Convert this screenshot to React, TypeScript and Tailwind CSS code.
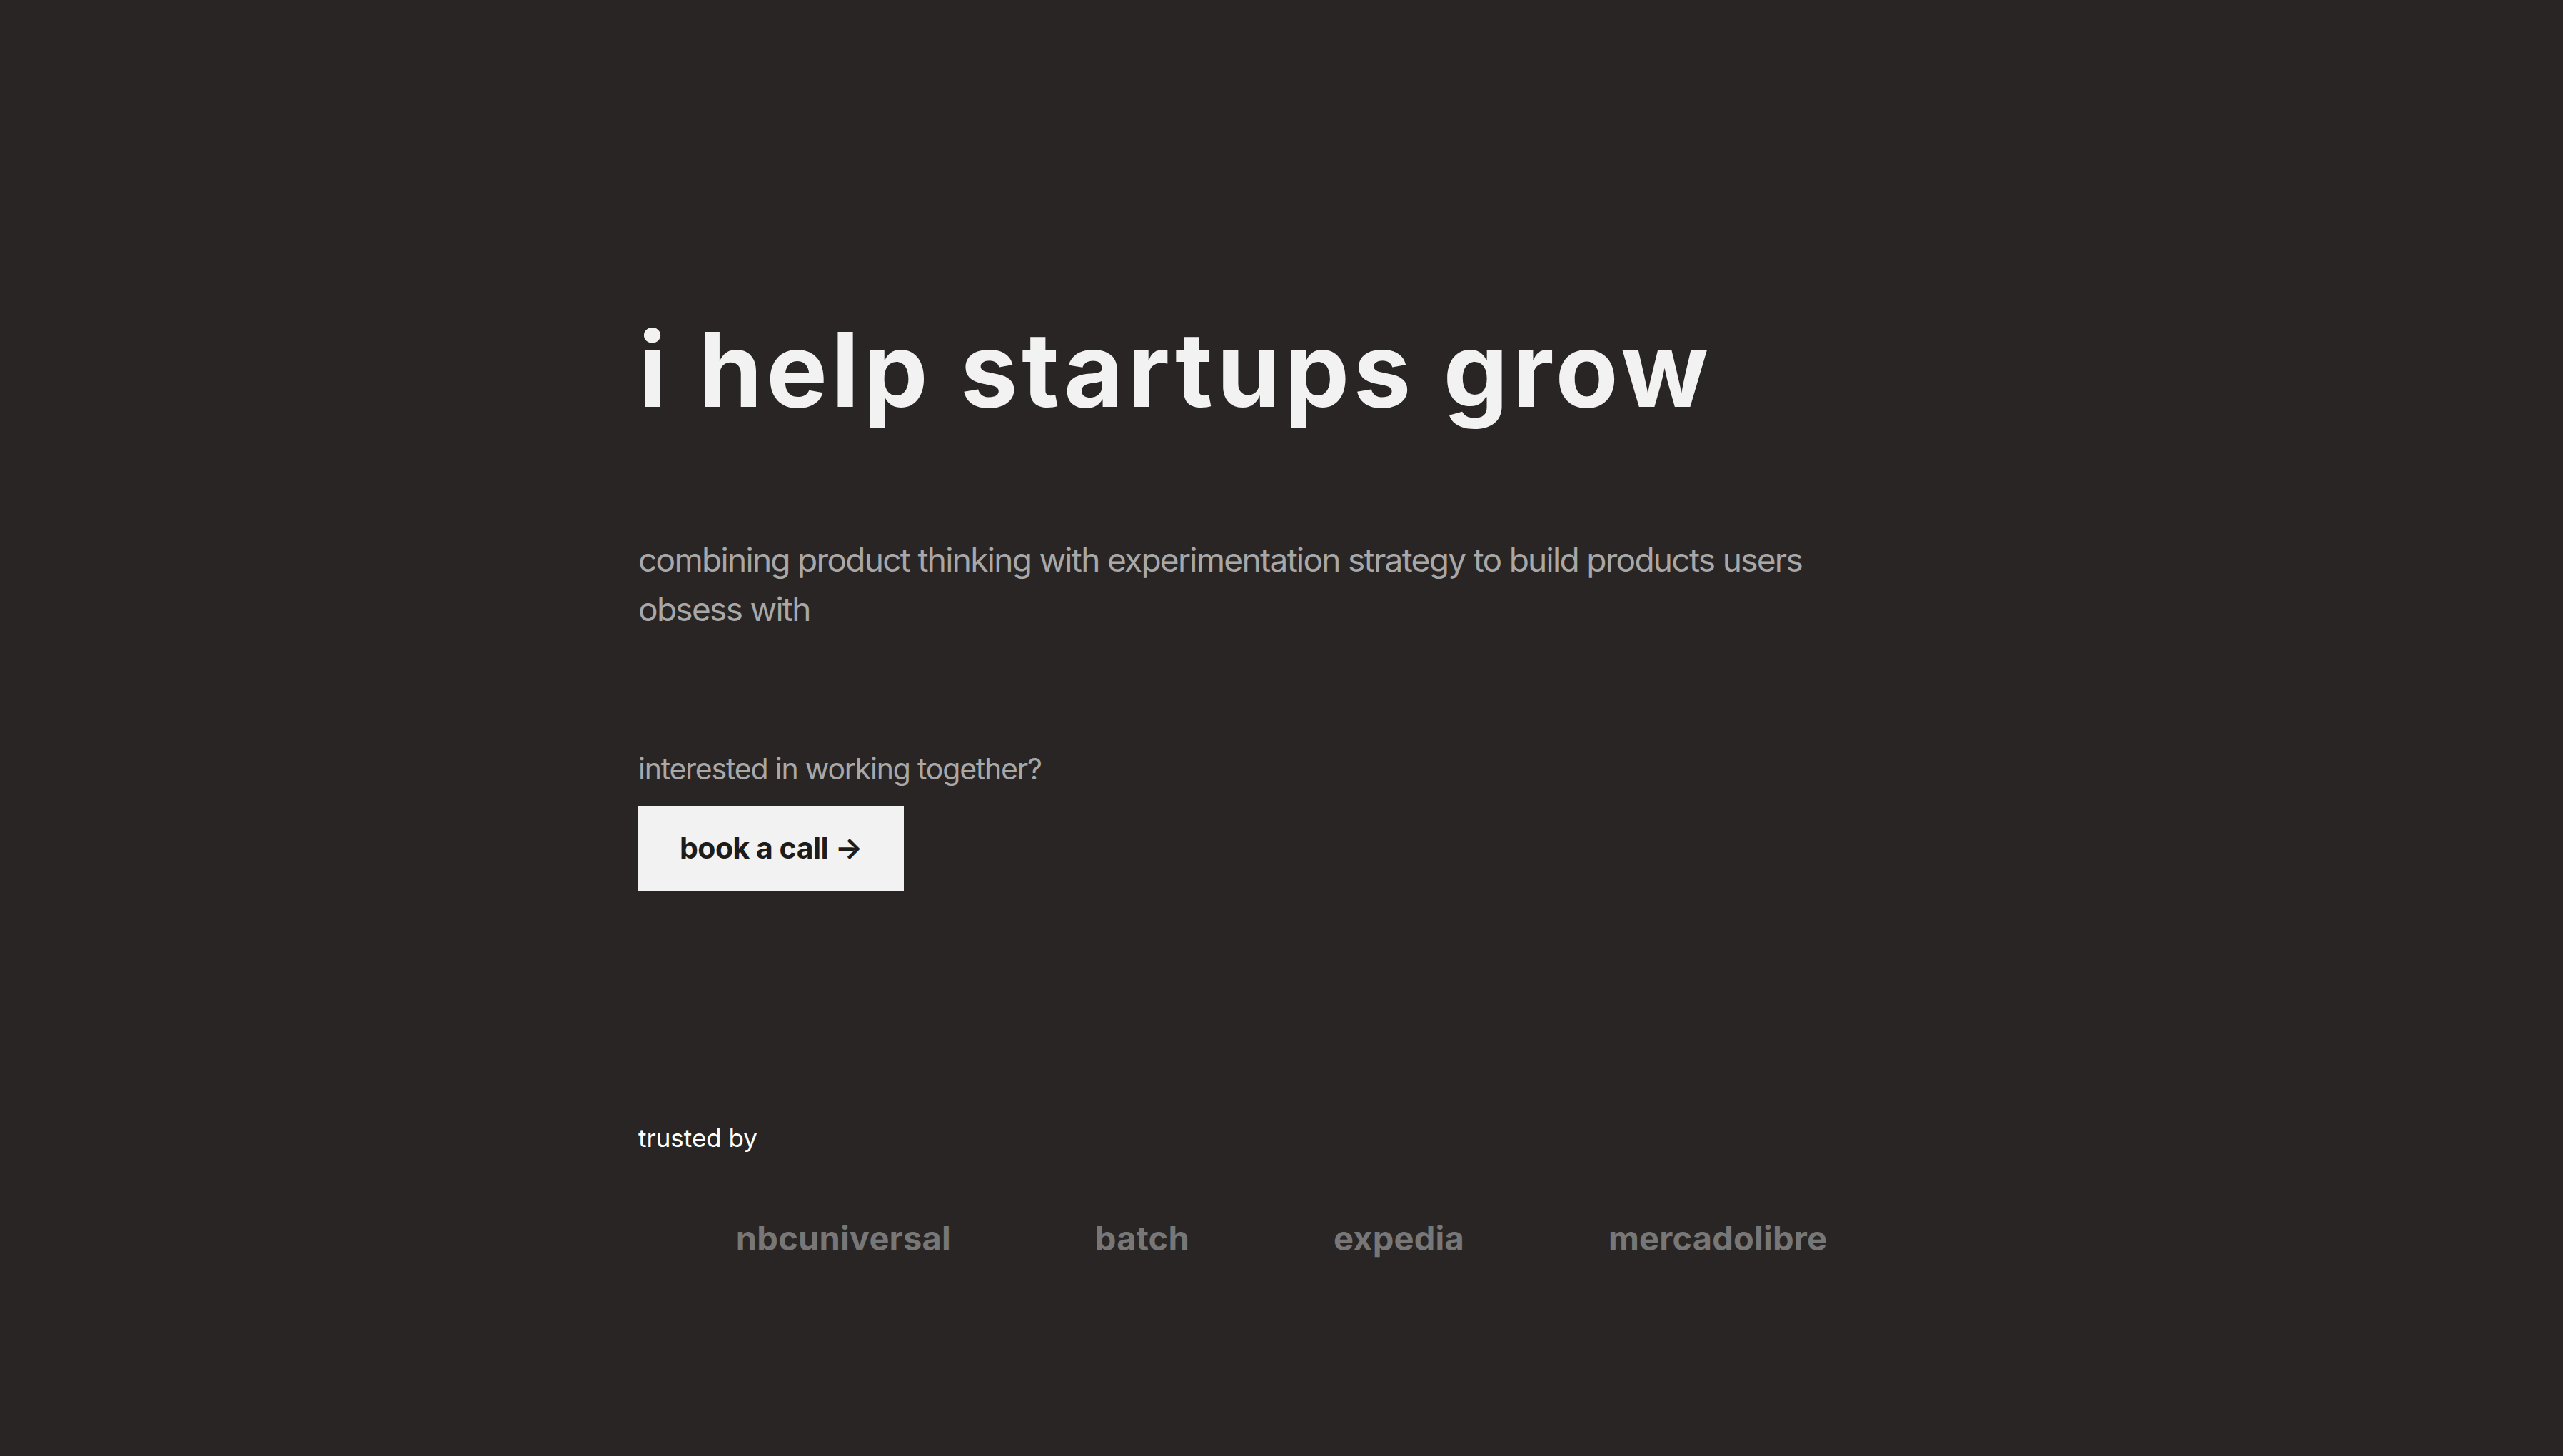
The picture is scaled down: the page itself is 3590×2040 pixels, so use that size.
import React from "react";

const font = { fontFamily: "Inter, 'Noto Sans', sans-serif" };

export default function App() {
  return (
    <div className="min-h-screen w-full bg-[#292524] flex justify-center" style={font}>
      <div className="w-[1802px] pt-[446px] pb-[200px] flex flex-col">
        <h1 className="text-[144px] leading-[144px] font-bold text-[#f2f2f2] tracking-[5.5px] m-0">
          i help startups grow
        </h1>
        <p className="mt-[160px] max-w-[1660px] text-[46px] leading-[69px] text-[#a8a8a8] tracking-[-1.7px]">
          combining product thinking with experimentation strategy to build products users obsess with
        </p>
        <p className="mt-[159px] text-[41px] leading-[61px] text-[#a8a8a8] tracking-[-1.2px]">
          interested in working together?
        </p>
        <div className="mt-[21px]">
          <button className="w-[372px] h-[120px] bg-[#f2f2f2] text-[#1c1c1c] text-[41px] font-bold tracking-[-0.5px] flex items-center justify-center">
            book a call →
          </button>
        </div>
        <p className="mt-[319px] text-[35px] leading-[52px] text-white">trusted by</p>
        <div className="mt-[80px] flex justify-center gap-[202px] text-[47px] leading-[69px] font-bold text-[#777777] tracking-[0.2px]">
          <span>nbcuniversal</span>
          <span>batch</span>
          <span>expedia</span>
          <span>mercadolibre</span>
        </div>
      </div>
    </div>
  );
}
